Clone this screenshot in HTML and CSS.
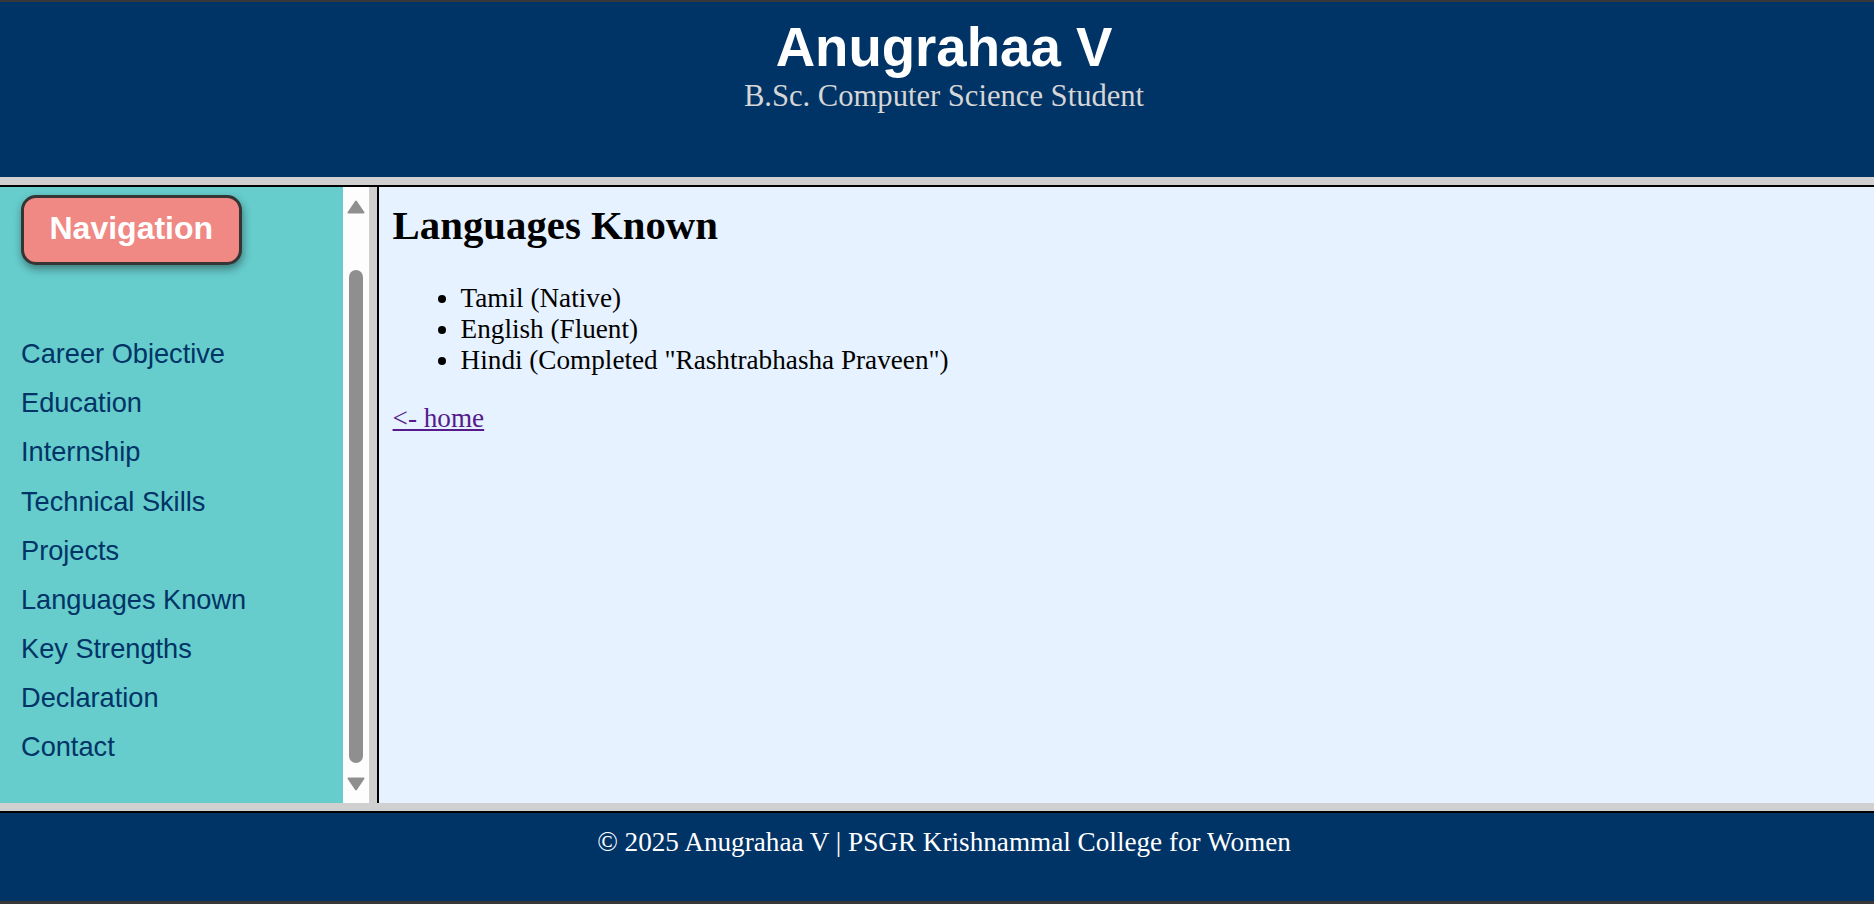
FILE: index.html
```html
<!DOCTYPE html>
<html lang="en">
<head>
<meta charset="utf-8">
<title>Anugrahaa V - Languages Known</title>
<link rel="stylesheet" href="styles.css">
</head>
<body>
<div class="page">
  <header class="top">
    <h1 class="name">Anugrahaa V</h1>
    <p class="role">B.Sc. Computer Science Student</p>
  </header>
  <div class="sep-h"></div>
  <div class="middle">
    <nav class="nav">
      <div class="nav-btn">Navigation</div>
      <ul class="nav-list">
        <li><a href="#">Career Objective</a></li>
        <li><a href="#">Education</a></li>
        <li><a href="#">Internship</a></li>
        <li><a href="#">Technical Skills</a></li>
        <li><a href="#">Projects</a></li>
        <li><a href="#">Languages Known</a></li>
        <li><a href="#">Key Strengths</a></li>
        <li><a href="#">Declaration</a></li>
        <li><a href="#">Contact</a></li>
      </ul>
    </nav>
    <div class="scrollbar">
      <svg class="arrow up" width="18" height="14" viewBox="0 0 18 14"><path d="M9 1.5 L16.5 12.5 L1.5 12.5 Z" fill="#8f8f8f" stroke="#8f8f8f" stroke-width="2" stroke-linejoin="round"/></svg>
      <div class="thumb"></div>
      <svg class="arrow down" width="18" height="14" viewBox="0 0 18 14"><path d="M1.5 1.5 L16.5 1.5 L9 12.5 Z" fill="#8f8f8f" stroke="#8f8f8f" stroke-width="2" stroke-linejoin="round"/></svg>
    </div>
    <div class="sep-v"></div>
    <main class="content">
      <h2 class="title">Languages Known</h2>
      <ul class="langs">
        <li>Tamil (Native)</li>
        <li>English (Fluent)</li>
        <li>Hindi (Completed "Rashtrabhasha Praveen")</li>
      </ul>
      <p class="back"><a href="#">&lt;- home</a></p>
    </main>
  </div>
  <div class="sep-h bottom"></div>
  <footer class="foot">
    <p>&copy; 2025 Anugrahaa V | PSGR Krishnammal College for Women</p>
  </footer>
</div>
</body>
</html>
```
FILE: styles.css
```css
html, body {
  margin: 0;
  padding: 0;
}
body {
  background: #383838;
  font-family: "Liberation Serif", "Times New Roman", serif;
}
.page {
  width: 1874px;
  height: 904px;
  box-sizing: border-box;
  padding-top: 2px;
  padding-bottom: 3px;
  display: flex;
  flex-direction: column;
}
.top {
  height: 175px;
  flex: none;
  box-sizing: border-box;
  background: #003366;
  text-align: center;
  padding: 13.6px 0 0 14px;
}
.name {
  margin: 0;
  font-family: "Liberation Sans", Arial, sans-serif;
  font-weight: bold;
  font-size: 54.6px;
  color: #ffffff;
}
.role {
  margin: 0;
  font-size: 30.6px;
  color: #d6d6d6;
}
.sep-h {
  height: 8px;
  flex: none;
  background: #d0d0d0;
  border-bottom: 2px solid #000;
}
.middle {
  height: 616px;
  flex: none;
  display: flex;
}
.nav {
  width: 343px;
  flex: none;
  box-sizing: border-box;
  background: #66cccc;
  padding: 8px 0 0 21px;
  display: flex;
  flex-direction: column;
  align-items: flex-start;
  font-family: "Liberation Sans", Arial, sans-serif;
}
.nav-btn {
  background: #f08884;
  color: #fff;
  font-weight: bold;
  font-size: 32px;
  line-height: 36.8px;
  padding: 11.6px 25.5px 15.6px;
  border: 3px solid #353535;
  border-radius: 15px;
  box-shadow: 1px 4px 8px rgba(0, 0, 0, 0.4);
}
.nav-list {
  list-style: none;
  margin: 64px 0 0 0;
  padding: 0;
}
.nav-list li {
  height: 49.2px;
  line-height: 49.2px;
  font-size: 27.2px;
}
.nav-list a {
  color: #003366;
  text-decoration: none;
}
.scrollbar {
  width: 26px;
  flex: none;
  background: #fdfdfd;
  display: flex;
  flex-direction: column;
  align-items: center;
}
.arrow {
  display: block;
  flex: none;
}
.arrow.up {
  margin-top: 13px;
}
.thumb {
  width: 14px;
  height: 493px;
  margin-top: 56px;
  border-radius: 7px;
  background: #8f8f8f;
}
.arrow.down {
  margin-top: 14px;
}
.sep-v {
  width: 8px;
  flex: none;
  background: #d0d0d0;
  border-right: 2px solid #000;
}
.content {
  flex: 1;
  background: #e6f2ff;
  padding: 14.8px 13.6px;
  font-size: 27.2px;
  color: #000;
}
.title {
  margin: 0 0 33.9px 0;
  font-size: 40.8px;
  font-weight: bold;
}
.langs {
  margin: 0 0 27.2px 0;
  padding-left: 68px;
}
.back {
  margin: 0;
}
.back a {
  color: #551a8b;
}
.foot {
  flex: 1;
  background: #003366;
  color: #ffffff;
  text-align: center;
  font-size: 27.2px;
  padding: 14.2px 0 0 14px;
}
.foot p {
  margin: 0;
}
```
